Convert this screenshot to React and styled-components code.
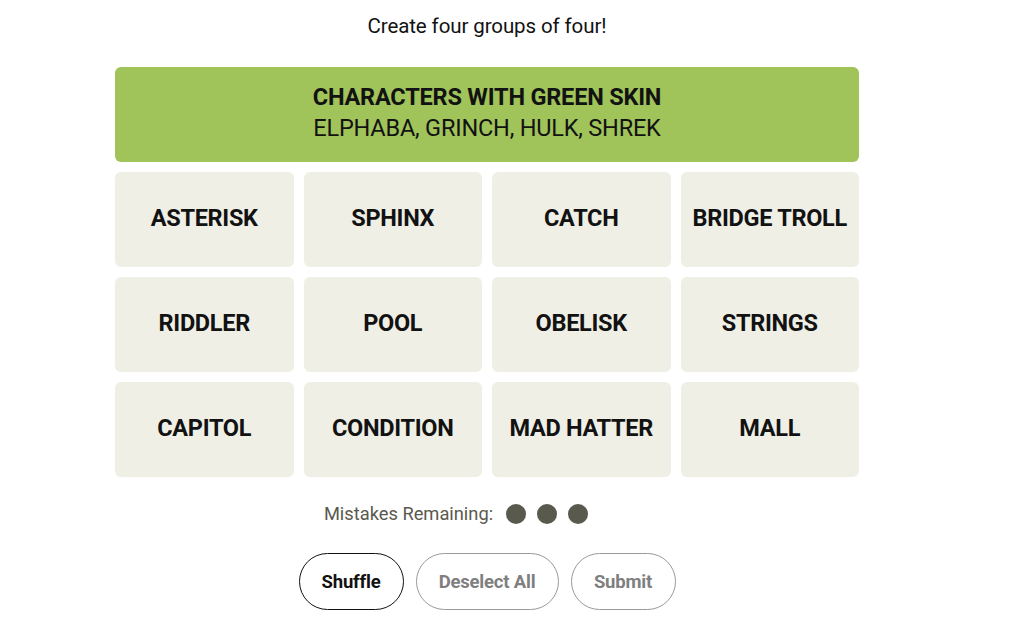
import React from "react";
import styled, { createGlobalStyle } from "styled-components";

const GlobalStyle = createGlobalStyle`
  body {
    margin: 0;
    background: #ffffff;
    font-family: "Roboto", "Liberation Sans", sans-serif;
    color: #121212;
  }
`;

const solved = {
  title: "CHARACTERS WITH GREEN SKIN",
  members: "ELPHABA, GRINCH, HULK, SHREK",
};

const words = [
  "ASTERISK",
  "SPHINX",
  "CATCH",
  "BRIDGE TROLL",
  "RIDDLER",
  "POOL",
  "OBELISK",
  "STRINGS",
  "CAPITOL",
  "CONDITION",
  "MAD HATTER",
  "MALL",
];

const App = () => {
  return (
    <>
      <GlobalStyle />
      <Page>
        <Prompt>Create four groups of four!</Prompt>
        <Board>
          <SolvedRow>
            <SolvedTitle>{solved.title}</SolvedTitle>
            <SolvedMembers>{solved.members}</SolvedMembers>
          </SolvedRow>
          {words.map((word) => (
            <Tile key={word}>{word}</Tile>
          ))}
        </Board>
        <Mistakes>
          <MistakesLabel>Mistakes Remaining:</MistakesLabel>
          <Dots>
            <Dot />
            <Dot />
            <Dot />
          </Dots>
        </Mistakes>
        <Controls>
          <ControlButton $width={105}>Shuffle</ControlButton>
          <ControlButton $width={143} $disabled>
            Deselect All
          </ControlButton>
          <ControlButton $width={105} $disabled>
            Submit
          </ControlButton>
        </Controls>
      </Page>
    </>
  );
};

const Page = styled.div`
  display: flex;
  flex-direction: column;
  align-items: center;
  padding: 14px 50px 0 0;
  width: 1024px;
  box-sizing: border-box;
`;

const Prompt = styled.p`
  margin: 0;
  font-family: "Roboto", "Liberation Sans", sans-serif;
  font-size: 20.5px;
  line-height: 24px;
  color: #121212;
  letter-spacing: -0.1px;
`;

const Board = styled.div`
  margin-top: 29px;
  width: 744px;
  display: grid;
  grid-template-columns: repeat(4, 1fr);
  grid-auto-rows: 95px;
  gap: 10px;
`;

const SolvedRow = styled.div`
  grid-column: 1 / -1;
  background: #a0c35a;
  border-radius: 6px;
  display: flex;
  flex-direction: column;
  align-items: center;
  justify-content: center;
  gap: 3px;
  padding-bottom: 4px;
`;

const SolvedTitle = styled.div`
  font-weight: 700;
  font-size: 23.5px;
  line-height: 28px;
  letter-spacing: -0.2px;
`;

const SolvedMembers = styled.div`
  font-weight: 400;
  font-size: 23.5px;
  line-height: 28px;
  letter-spacing: -0.2px;
`;

const Tile = styled.div`
  background: #efefe6;
  border-radius: 6px;
  display: flex;
  align-items: center;
  justify-content: center;
  padding-bottom: 3px;
  font-weight: 700;
  font-size: 23.5px;
  letter-spacing: -0.3px;
  color: #121212;
  white-space: nowrap;
`;

const Mistakes = styled.div`
  margin-top: 26px;
  margin-right: 62px;
  display: flex;
  align-items: center;
  gap: 13px;
`;

const MistakesLabel = styled.span`
  font-size: 18.3px;
  color: #5a594e;
`;

const Dots = styled.div`
  display: flex;
  gap: 11px;
`;

const Dot = styled.span`
  width: 20px;
  height: 20px;
  border-radius: 50%;
  background: #5a594e;
`;

const Controls = styled.div`
  margin-top: 29px;
  display: flex;
  gap: 12px;
`;

const ControlButton = styled.button`
  width: ${(p) => p.$width}px;
  height: 57px;
  border-radius: 29px;
  background: #ffffff;
  border: 1px solid ${(p) => (p.$disabled ? "#9a9a9a" : "#121212")};
  color: ${(p) => (p.$disabled ? "#7f7f7f" : "#121212")};
  font-family: "Roboto", "Liberation Sans", sans-serif;
  font-weight: 700;
  font-size: 18.5px;
  letter-spacing: -0.2px;
  cursor: pointer;
`;

export default App;
